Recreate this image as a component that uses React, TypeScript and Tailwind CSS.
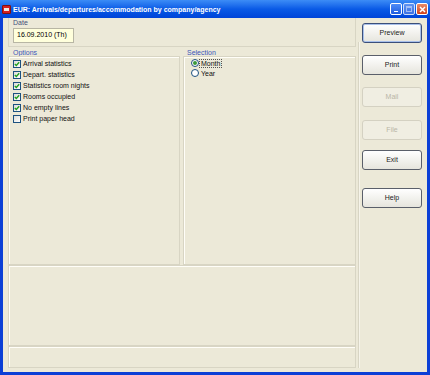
import React from "react";

const font = { fontFamily: '"Liberation Sans", Arial, sans-serif' };

function Check({ checked, label }: { checked: boolean; label: string }) {
  return (
    <div className="flex items-center h-[11px] gap-[2px]">
      <div className="w-[8px] h-[8px] border border-[#1c5180] bg-gradient-to-br from-[#dcdcd7] to-white flex items-center justify-center">
        {checked && (
          <svg width="6" height="6" viewBox="0 0 6 6">
            <path d="M0.8 3 L2.3 4.5 L5.2 1.2" stroke="#21a121" strokeWidth="1.4" fill="none" />
          </svg>
        )}
      </div>
      <span className="text-[7px] text-[#111] leading-none">{label}</span>
    </div>
  );
}

function Radio({ checked, label, focus }: { checked: boolean; label: string; focus?: boolean }) {
  return (
    <div className="flex items-center h-[10px] gap-[1px]">
      <div className="w-[8px] h-[8px] rounded-full border border-[#1c5180] bg-white flex items-center justify-center">
        {checked && <div className="w-[4px] h-[4px] rounded-full bg-[#3a9a3a]" />}
      </div>
      <span className={"text-[7px] text-[#111] leading-none px-[1px] " + (focus ? "outline outline-1 outline-dotted outline-[#555]" : "")}>{label}</span>
    </div>
  );
}

function Btn({ label, disabled, def }: { label: string; disabled?: boolean; def?: boolean }) {
  return (
    <div
      className={
        "w-[60px] h-[20px] rounded-[3px] border flex items-center justify-center text-[7px] " +
        (disabled
          ? "border-[#d4d1c2] bg-[#f0eee2] text-[#b9b6a6]"
          : def
          ? "border-[#3b4f7a] bg-gradient-to-b from-white to-[#e6e5dd] text-[#222] shadow-[inset_0_0_0_1px_#a8c0ea]"
          : "border-[#5a5f6a] bg-gradient-to-b from-white to-[#e6e5dd] text-[#222]")
      }
    >
      {label}
    </div>
  );
}

export default function App() {
  return (
    <div className="w-[430px] h-[375px] bg-[#0b3fd6] flex flex-col overflow-hidden" style={font}>
      {/* Title bar */}
      <div className="h-[18px] shrink-0 bg-gradient-to-b from-[#3c8cf6] via-[#0a5ae6] to-[#0044d8] flex items-center pl-[2px] pr-[2px]">
        <div className="w-[9px] h-[9px] bg-[#d42020] border border-[#801010] rounded-[1px] mr-[2px] flex items-center justify-center">
          <div className="w-[5px] h-[3px] bg-[#f2e8e0]" />
        </div>
        <span className="text-[7px] font-bold text-white whitespace-nowrap leading-none">
          EUR: Arrivals/departures/accommodation by company/agency
        </span>
        <div className="ml-auto flex gap-[1px]">
          <div className="w-[12px] h-[12px] rounded-[2px] border border-white bg-gradient-to-b from-[#4f8cf6] to-[#1f5ce0] flex items-end justify-center pb-[2px]">
            <div className="w-[4px] h-[1.5px] bg-white" />
          </div>
          <div className="w-[12px] h-[12px] rounded-[2px] border border-white bg-gradient-to-b from-[#6f9cf2] to-[#4a7ae6] opacity-80 flex items-center justify-center">
            <div className="w-[6px] h-[6px] border border-[#c8d6f8] border-t-2" />
          </div>
          <div className="w-[12px] h-[12px] rounded-[2px] border border-white bg-gradient-to-b from-[#e88a66] to-[#d0401a] flex items-center justify-center">
            <svg width="7" height="7" viewBox="0 0 7 7">
              <path d="M1 1 L6 6 M6 1 L1 6" stroke="white" strokeWidth="1.5" />
            </svg>
          </div>
        </div>
      </div>

      {/* Body */}
      <div className="flex-1 mx-[3px] mb-[3px] bg-[#ece9d8] flex">
        {/* Left area */}
        <div className="w-[348px] ml-[5px] flex flex-col">
          {/* Date group */}
          <div className="h-[29px] border-x border-b border-[#d8d5c4] pl-[4px] pt-[1px] flex flex-col">
            <span className="text-[7px] text-[#44517a] leading-none h-[9px]">Date</span>
            <div className="w-[61px] h-[15px] bg-[#ffffdc] border border-[#b8b6a4] flex items-center pl-[3px] text-[7px] text-black">
              16.09.2010 (Th)
            </div>
          </div>
          {/* Options / Selection */}
          <div className="h-[216px] mt-[2px] flex gap-[3px]">
            <div className="w-[172px] flex flex-col">
              <span className="text-[7px] text-[#3b55b8] leading-none h-[7px] pl-[5px]">Options</span>
              <div className="flex-1 border border-[#d8d5c4] shadow-[inset_1px_1px_0_#fffef8] pl-[4px] pt-[1px]">
                <Check checked label="Arrival statistics" />
                <Check checked label="Depart. statistics" />
                <Check checked label="Statistics room nights" />
                <Check checked label="Rooms occupied" />
                <Check checked label="No empty lines" />
                <Check checked={false} label="Print paper head" />
              </div>
            </div>
            <div className="flex-1 flex flex-col">
              <span className="text-[7px] text-[#3b55b8] leading-none h-[7px] pl-[4px]">Selection</span>
              <div className="flex-1 border border-[#d8d5c4] shadow-[inset_1px_1px_0_#fffef8] pl-[7px] pt-[1px]">
                <Radio checked label="Month" focus />
                <Radio checked={false} label="Year" />
              </div>
            </div>
          </div>
          {/* Panels */}
          <div className="h-[81px] border border-[#d8d5c4] shadow-[inset_1px_1px_0_#fffef8]" />
          <div className="h-[22px] border border-[#d8d5c4] shadow-[inset_1px_1px_0_#fffef8]" />
        </div>
        {/* separator */}
        <div className="w-[2px] ml-[2px] border-l border-[#d8d5c4] bg-[#f6f4ea] mt-[24px] mb-[4px]" />
        {/* Buttons */}
        <div className="ml-[2px] pt-[5px] flex flex-col">
          <Btn label="Preview" def />
          <div className="h-[12px]" />
          <Btn label="Print" />
          <div className="h-[12px]" />
          <Btn label="Mail" disabled />
          <div className="h-[13px]" />
          <Btn label="File" disabled />
          <div className="h-[10px]" />
          <Btn label="Exit" />
          <div className="h-[18px]" />
          <Btn label="Help" />
        </div>
      </div>
    </div>
  );
}
